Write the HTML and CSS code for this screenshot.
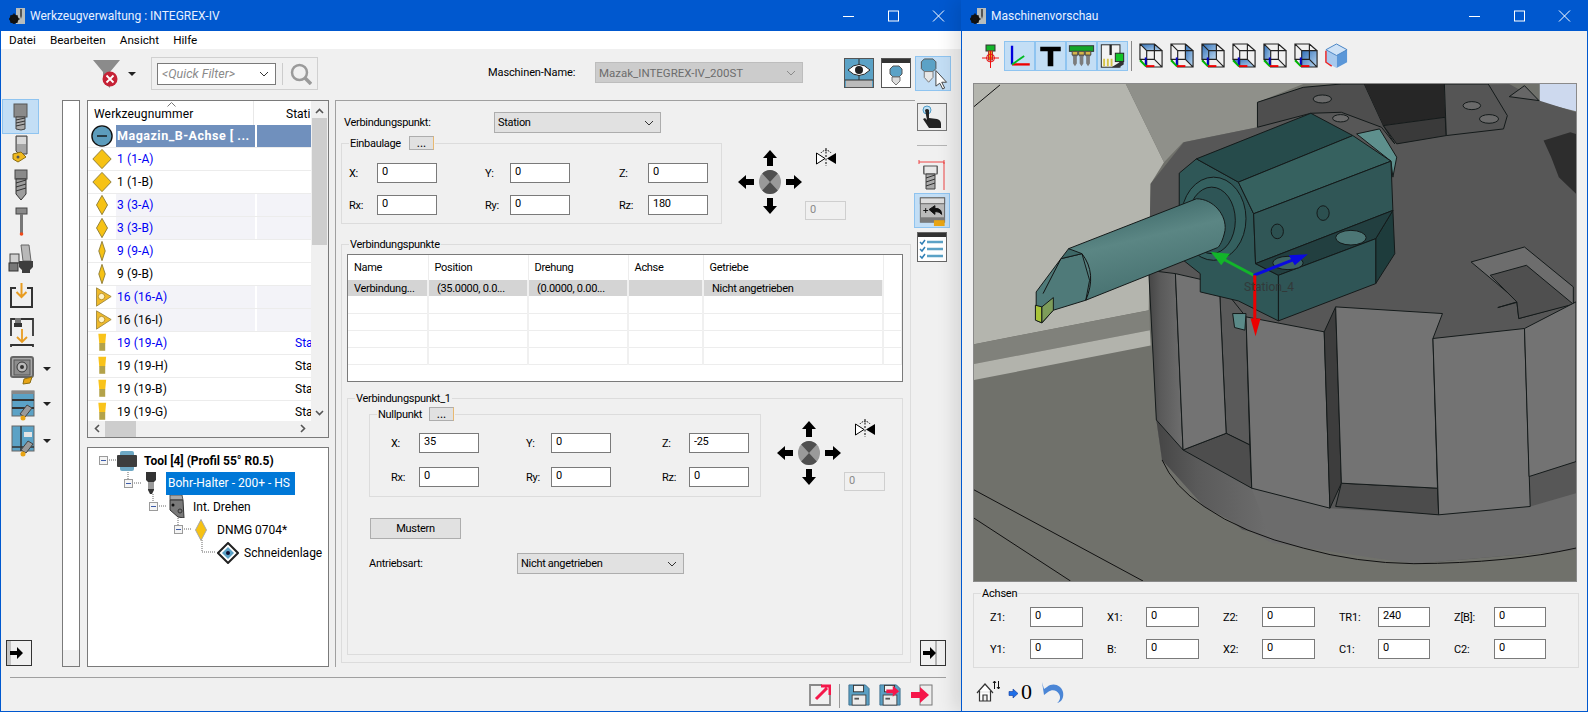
FILE: index.html
```html
<!DOCTYPE html>
<html lang="de">
<head>
<meta charset="utf-8">
<title>Werkzeugverwaltung</title>
<link rel="stylesheet" href="styles.css">
</head>
<body>
<svg class="defs" width="0" height="0" aria-hidden="true">
  <defs>
    <linearGradient id="gBlue" x1="0" y1="0" x2="1" y2="1"><stop offset="0" stop-color="#2f6fb8"/><stop offset="1" stop-color="#bcd8f0"/></linearGradient>
    <linearGradient id="gShank" x1="0.35" y1="0.05" x2="0.62" y2="0.8"><stop offset="0" stop-color="#3d6868"/><stop offset="0.45" stop-color="#5b8684"/><stop offset="1" stop-color="#4a7473"/></linearGradient>
    <linearGradient id="gSide" x1="0" y1="0" x2="1" y2="0"><stop offset="0" stop-color="#454545"/><stop offset="0.35" stop-color="#5a5a5a"/><stop offset="1" stop-color="#6e6e6e"/></linearGradient>
    <symbol id="app" viewBox="0 0 16 16"><rect x="7" y="0" width="9" height="16" fill="#b8bdbd"/><path d="M11 1h2v7l-1 3-1-3z" fill="#555"/><circle cx="5" cy="11" r="4.5" fill="#111"/><circle cx="5" cy="11" r="1.6" fill="#ddd"/><path d="M5 5.500v11M-.5 11h11M1.500 7.500l7 7M8.500 7.500l-7 7" stroke="#111" stroke-width="1.400"/></symbol>
    <symbol id="dWide" viewBox="0 0 24 24"><path d="M12 1.500 22 12 12 22.500 2 12z" fill="#f6c214" stroke="#8b7a34"/></symbol>
    <symbol id="dMid" viewBox="0 0 24 24"><path d="M12 1.500 18 12 12 22.500 6 12z" fill="#f6c214" stroke="#8b7a34"/></symbol>
    <symbol id="dThin" viewBox="0 0 24 24"><path d="M12 1.500 15.500 12 12 22.500 8.500 12z" fill="#f6c214" stroke="#8b7a34"/></symbol>
    <symbol id="tri" viewBox="0 0 24 24"><path d="M6 2 22 11.500 6 22z" fill="#f0ba2a" stroke="#a08a40"/><circle cx="11.500" cy="11.500" r="3.500" fill="#fff3c8" stroke="#b58c1f"/></symbol>
    <symbol id="bar" viewBox="0 0 24 24"><path d="M8 2h8.500l-1 10.500H9z" fill="#f9c31a"/><path d="M9 12h6.500v8.500H9z" fill="#b3a24a"/></symbol>
    <symbol id="minus" viewBox="0 0 24 24"><circle cx="12" cy="12" r="11" fill="#5c9cbc" stroke="#111" stroke-width="1.500"/><path d="M6.500 12h11" stroke="#111" stroke-width="1.500"/></symbol>
    <symbol id="exp" viewBox="0 0 9 9"><rect x=".5" y=".5" width="8" height="8" fill="#f4f4f4" stroke="#9a9a9a"/><path d="M2 4.500h5" stroke="#3c5ba8"/></symbol>
    <symbol id="mirror" viewBox="0 0 20 18"><path d="M.5 5 9 10.500.5 16z" fill="#fff" stroke="#000"/><path d="M20 5 11 10.500 20 16z" fill="#000"/><path d="M10 0v18" stroke="#000" stroke-dasharray="2 1.500"/><path d="M5 5a6 6 0 0 1 10 0" fill="none" stroke="#000" stroke-dasharray="1.500 1"/></symbol>
    <symbol id="nav" viewBox="0 0 64 64"><path d="M32 0 39 8H35V16H29V8H25zM32 64 39 56H35V48H29V56H25zM0 32 8 25V29H16V35H8V39zM64 32 56 25V29H48V35H56V39z" fill="#000"/><ellipse cx="32" cy="32" rx="11" ry="12" fill="#9a9a9a"/><path d="M32 32 24.200 23.500A11 12 0 0 1 39.800 23.500zM32 32 39.800 40.500A11 12 0 0 1 24.200 40.500z" fill="#4f4f4f"/></symbol>
    <symbol id="push" viewBox="0 0 26 26"><rect x=".5" y=".5" width="25" height="25" fill="#f0f0f0" stroke="#333"/><rect x="1" y="1" width="4" height="24" fill="#c4c4c4"/><path d="M4 11h7V7l6 6-6 6v-4H4z" fill="#000"/></symbol>
    <symbol id="pushR" viewBox="0 0 26 26"><rect x=".5" y=".5" width="25" height="25" fill="#f0f0f0" stroke="#333"/><rect x="15" y="1" width="2" height="24" fill="#b4b4b4"/><path d="M3 11h7V7l6 6-6 6v-4H3z" fill="#000"/></symbol>
    <symbol id="cube" viewBox="0 0 26 26"><path d="M1 1H16V17H1zM8 8H24V25H8zM1 1 8 8M16 1 24 8M1 17 8 25M16 17 24 25" fill="none" stroke="#222" stroke-width="1.200"/><path d="M7 15V24" stroke="#00c" stroke-width="2"/><path d="M7 24H16" stroke="#e00" stroke-width="2"/><path d="M1 18 7 24" stroke="#0b0" stroke-width="2"/></symbol>
    <symbol id="floppy" viewBox="0 0 24 24"><path d="M1 1H19L23 5V23H1z" fill="#5aa0c4" stroke="#3d6f8c"/><rect x="6" y="1.500" width="11" height="7" fill="#f4f4f4" stroke="#333"/><rect x="4.500" y="12" width="15" height="11" fill="#ececec" stroke="#444"/><path d="M7 16h5" stroke="#555" stroke-width="2"/></symbol>
  </defs>
</svg>

<main class="desktop">
  <section class="win win-left">
    <header class="title">
      <svg class="title-ico"><use href="#app"/></svg>
      <span class="title-text">Werkzeugverwaltung : INTEGREX-IV</span>
      <span class="wctl"><svg viewBox="0 0 45 12"><path d="M17 6.500H28" stroke="#fff"/></svg></span>
      <span class="wctl"><svg viewBox="0 0 45 12"><rect x="17.500" y="1" width="10" height="10" fill="none" stroke="#fff"/></svg></span>
      <span class="wctl"><svg viewBox="0 0 45 12"><path d="M17 .5 28 11.500M28 .5 17 11.500" stroke="#fff"/></svg></span>
    </header>
    <nav class="menu"><span>Datei</span><span>Bearbeiten</span><span>Ansicht</span><span>Hilfe</span></nav>

    <div class="topbar">
      <svg class="funnel" viewBox="0 0 30 30"><path d="M1 1H28L18 13V29L11 22V13z" fill="#8b8b8b"/><circle cx="18" cy="20" r="7.500" fill="#c62236"/><path d="M14.500 16.500l7 7M21.500 16.500l-7 7" stroke="#fff" stroke-width="1.800"/></svg>
      <i class="caret funnel-caret"></i>
      <div class="qf">
        <div class="combo qf-combo"><em>&lt;Quick Filter&gt;</em><svg class="chev" viewBox="0 0 10 6"><path d="M1 1l4 4 4-4" fill="none" stroke="#333"/></svg></div>
        <b class="qf-sep"></b>
        <svg class="search" viewBox="0 0 22 22"><circle cx="9.500" cy="9.500" r="7.500" fill="none" stroke="#9a9a9a" stroke-width="2.500"/><path d="M15 15l6 6" stroke="#9a9a9a" stroke-width="3.500"/></svg>
      </div>
      <span class="mach-label">Maschinen-Name:</span>
      <div class="combo mach"><span>Mazak_INTEGREX-IV_200ST</span><svg class="chev" viewBox="0 0 10 6"><path d="M1 1l4 4 4-4" fill="none" stroke="#8a8a8a"/></svg></div>
      <svg class="tb-ico eye" viewBox="0 0 30 30"><rect x=".5" y=".5" width="29" height="29" fill="#5ba2c6" stroke="#555"/><rect x="2" y="22" width="26" height="7" fill="#bbb"/><path d="M15 1v21M1 22h28" stroke="#333"/><path d="M4 12q11-11 22 0q-11 11-22 0z" fill="#fff" stroke="#222"/><circle cx="15" cy="12" r="4" fill="#222"/></svg>
      <svg class="tb-ico win2" viewBox="0 0 30 30"><rect x=".5" y=".5" width="29" height="29" fill="#fff" stroke="#555"/><rect x="1" y="1" width="28" height="4" fill="#333"/><path d="M9 11l3-3h6l3 3v5l-3 3h-6l-3-3z" fill="#5ba2c6" stroke="#555"/><path d="M11 19h8v4l-4 4-4-4z" fill="#ddd" stroke="#777"/></svg>
      <button class="hl tb-hl"><svg viewBox="0 0 34 34"><path d="M5 5l3-3h9l3 3v7l-3 3H8l-3-3z" fill="#5ba2c6" stroke="#555"/><path d="M8 15h9v6l-4.500 5L8 21z" fill="#e8e8e8" stroke="#777"/><path d="M20 14v16l4-3 3 6 2-1-3-6h5z" fill="#fff" stroke="#444"/></svg></button>
    </div>

    <div class="mainrow">
      <aside class="rail">
        <div class="rail-btns">
          <button class="rb hl"><svg viewBox="0 0 36 36"><rect x="11" y="5" width="13" height="13" fill="#8a8a8a" stroke="#555"/><path d="M13 18h9v12l-4 1-5-1z" fill="#aaa" stroke="#444"/><path d="M13 21l9-2M13 24l9-2M13 27l9-2" stroke="#333"/></svg></button>
          <button class="rb"><svg viewBox="0 0 36 36"><path d="M13 3h11v18h-8l-3-3z" fill="#a4a4a4" stroke="#444"/><path d="M14 4h9v7h-9z" fill="#d8d8d8"/><path d="M10 21l8-2 5 5-8 5-5-3z" fill="#f0b91e" stroke="#8a6c10"/><circle cx="15" cy="24" r="1.500" fill="#555"/></svg></button>
          <button class="rb"><svg viewBox="0 0 36 36"><rect x="12" y="2" width="12" height="9" fill="#8a8a8a" stroke="#444"/><path d="M13 11h10v15l-5 6-5-6z" fill="#9d9d9d" stroke="#333"/><path d="M13 15l10-3M13 19l10-3M13 23l10-3" stroke="#333"/></svg></button>
          <button class="rb"><svg viewBox="0 0 36 36"><rect x="13" y="4" width="11" height="6" fill="#8a8a8a" stroke="#444"/><rect x="17" y="10" width="3" height="19" fill="#777"/><circle cx="18.500" cy="30" r="1.800" fill="#f04a1a"/></svg></button>
          <button class="rb"><svg viewBox="0 0 36 36"><path d="M18 3h8l2 16H20z" fill="#b8b8b8" stroke="#666"/><path d="M16 19h14v6l-3 3v3h-8v-3l-3-3z" fill="#3e3e3e"/><rect x="7" y="12" width="9" height="9" fill="#d0d0d0" stroke="#444"/><rect x="6" y="21" width="9" height="8" fill="#777" stroke="#333"/></svg></button>
          <button class="rb"><svg viewBox="0 0 36 36"><path d="M13 9H8v19h21V9H24" fill="none" stroke="#333" stroke-width="2"/><path d="M18.500 4v14M13.500 13l5 5 5-5" fill="none" stroke="#e89c20" stroke-width="2"/></svg></button>
          <button class="rb"><svg viewBox="0 0 36 36"><path d="M18 4H30V21M8 21V4h4M8 32v-2H30v2" fill="none" stroke="#333" stroke-width="1.800"/><rect x="12" y="3" width="6" height="5" fill="#777"/><rect x="11" y="8" width="8" height="4" fill="#333"/><path d="M19 14v13M14 22l5 5 5-5" fill="none" stroke="#e89c20" stroke-width="1.800"/></svg></button>
          <button class="rb rb-m"><svg viewBox="0 0 36 36"><rect x="8" y="6" width="22" height="20" rx="2" fill="#a8a8a8" stroke="#666" stroke-width="2"/><rect x="11" y="9" width="16" height="15" fill="#8d8d8d" stroke="#555"/><circle cx="19" cy="16" r="5" fill="#bbb" stroke="#333"/><circle cx="19" cy="16" r="2" fill="#333"/><path d="M21 28l8-2-2 6-7 1z" fill="#e8a414" stroke="#8a6c10"/></svg><i class="caret"></i></button>
          <button class="rb rb-m"><svg viewBox="0 0 36 36"><rect x="9" y="4" width="22" height="25" fill="#5ba2c6" stroke="#666"/><rect x="9" y="4" width="22" height="3" fill="#888"/><path d="M9 13h22M9 21h22" stroke="#333" stroke-width="2"/><path d="M24 18l5 3-7 9-5-3z" fill="#9a9a9a" stroke="#444"/><circle cx="20" cy="31" r="2.500" fill="#e8a414"/></svg><i class="caret"></i></button>
          <button class="rb rb-m"><svg viewBox="0 0 36 36"><rect x="9" y="3" width="22" height="25" fill="#5ba2c6" stroke="#666"/><path d="M18 3v25M9 24h22" stroke="#333" stroke-width="1.500"/><rect x="21" y="9" width="8" height="5" fill="#e4e4e4"/><path d="M25 18l5 3-7 9-5-3z" fill="#9a9a9a" stroke="#444"/><circle cx="20" cy="31" r="2.500" fill="#e8a414"/></svg><i class="caret"></i></button>
        </div>
        <svg class="push"><use href="#push"/></svg>
      </aside>

      <div class="thin"><div class="thin-in"></div></div>

      <div class="stack">
        <div class="list">
          <div class="list-top">
            <div class="list-main">
              <div class="list-head"><span class="h1">Werkzeugnummer</span><span class="h2">Stati</span><svg class="sort" viewBox="0 0 9 5"><path d="M.5 4.500 4.500.5l4 4" fill="none" stroke="#777"/></svg></div>
              <div class="row sel"><svg class="ri"><use href="#minus"/></svg><span class="c1">Magazin_B-Achse [ ...</span><span class="c2"></span></div>
              <div class="row"><svg class="ri"><use href="#dWide"/></svg><span class="c1 bl">1 (1-A)</span><span class="c2"></span></div>
              <div class="row"><svg class="ri"><use href="#dWide"/></svg><span class="c1">1 (1-B)</span><span class="c2"></span></div>
              <div class="row alt"><svg class="ri"><use href="#dMid"/></svg><span class="c1 bl">3 (3-A)</span><span class="c2"></span></div>
              <div class="row alt"><svg class="ri"><use href="#dMid"/></svg><span class="c1 bl">3 (3-B)</span><span class="c2"></span></div>
              <div class="row"><svg class="ri"><use href="#dThin"/></svg><span class="c1 bl">9 (9-A)</span><span class="c2"></span></div>
              <div class="row"><svg class="ri"><use href="#dThin"/></svg><span class="c1">9 (9-B)</span><span class="c2"></span></div>
              <div class="row alt"><svg class="ri"><use href="#tri"/></svg><span class="c1 bl">16 (16-A)</span><span class="c2"></span></div>
              <div class="row alt"><svg class="ri"><use href="#tri"/></svg><span class="c1">16 (16-I)</span><span class="c2"></span></div>
              <div class="row"><svg class="ri"><use href="#bar"/></svg><span class="c1 bl">19 (19-A)</span><span class="c2 bl">Station</span></div>
              <div class="row"><svg class="ri"><use href="#bar"/></svg><span class="c1">19 (19-H)</span><span class="c2">Station</span></div>
              <div class="row"><svg class="ri"><use href="#bar"/></svg><span class="c1">19 (19-B)</span><span class="c2">Station</span></div>
              <div class="row"><svg class="ri"><use href="#bar"/></svg><span class="c1">19 (19-G)</span><span class="c2">Station</span></div>
            </div>
            <div class="vscroll">
              <svg class="sa" viewBox="0 0 9 6"><path d="M1 5l3.500-3.500L8 5" fill="none" stroke="#555" stroke-width="1.600"/></svg>
              <div class="vthumb"></div>
              <svg class="sa sa-d" viewBox="0 0 9 6"><path d="M1 1l3.500 3.500L8 1" fill="none" stroke="#555" stroke-width="1.600"/></svg>
            </div>
          </div>
          <div class="hscroll">
            <svg class="sh" viewBox="0 0 6 9"><path d="M5 1 1.500 4.500 5 8" fill="none" stroke="#555" stroke-width="1.600"/></svg>
            <div class="hthumb"></div>
            <svg class="sh sh-r" viewBox="0 0 6 9"><path d="M1 1l3.500 3.500L1 8" fill="none" stroke="#555" stroke-width="1.600"/></svg>
          </div>
        </div>

        <div class="tree">
          <svg class="tree-lines" viewBox="0 0 240 130"><path d="M19 12H28M40 24V34M44 35H54M65 46V58M69 58H79M90 70V80M94 81H104M114 92V104H128" fill="none" stroke="#666" stroke-dasharray="1 1"/></svg>
          <div class="tr tr0"><svg class="ex"><use href="#exp"/></svg><svg class="ti ti0" viewBox="0 0 20 20"><rect x="3" y="0" width="14" height="20" rx="2" fill="#6ea8c4"/><rect x="0" y="4" width="20" height="12" rx="1" fill="#3d3d3d"/></svg><b>Tool [4] (Profil 55° R0.5)</b></div>
          <div class="tr tr1"><svg class="ex"><use href="#exp"/></svg><svg class="ti ti1" viewBox="0 0 12 23"><path d="M1 0h10v8l-2 2v8l-2 4H5l-2-4v-8L1 8z" fill="#333"/><path d="M3 10h6v7H3z" fill="#9a9a9a"/></svg><span class="tsel">Bohr-Halter - 200+ - HS</span></div>
          <div class="tr tr2"><svg class="ex"><use href="#exp"/></svg><svg class="ti ti2" viewBox="0 0 16 23"><path d="M1 0h12l1 5H1z" fill="#a8a8a8" stroke="#555"/><path d="M1 5h13l1 18-6-1-8-7z" fill="#7a7a7a" stroke="#333"/><circle cx="4" cy="10" r="1.500" fill="#111"/><circle cx="11" cy="16" r="2" fill="none" stroke="#333"/></svg><span>Int. Drehen</span></div>
          <div class="tr tr3"><svg class="ex"><use href="#exp"/></svg><svg class="ti ti3" viewBox="0 0 12 22"><path d="M6 .5 11.500 11 6 21.500 .5 11z" fill="#f6c214" stroke="#a8a8a8"/></svg><span>DNMG 0704*</span></div>
          <div class="tr tr4"><svg class="ti ti4" viewBox="0 0 22 22"><path d="M11 1 21 11 11 21 1 11z" fill="#fff" stroke="#222" stroke-width="2"/><path d="M11 5 17 11 11 17 5 11z" fill="#5ba2c6"/><circle cx="11" cy="11" r="2" fill="#113"/></svg><span>Schneidenlage</span></div>
        </div>
      </div>

      <div class="panel">
        <div class="vp-row"><span class="vp-label">Verbindungspunkt:</span><div class="combo vp-combo"><span>Station</span><svg class="chev" viewBox="0 0 10 6"><path d="M1 1l4 4 4-4" fill="none" stroke="#333"/></svg></div></div>

        <div class="xf-row">
          <div class="group g-ein">
            <div class="legend"><span>Einbaulage</span><button class="dots">...</button></div>
            <div class="coords c-a">
              <label>X:</label><input value="0"><label>Y:</label><input value="0"><label>Z:</label><input value="0">
              <label>Rx:</label><input value="0"><label>Ry:</label><input value="0"><label>Rz:</label><input value="180">
            </div>
          </div>
          <svg class="nav"><use href="#nav"/></svg>
          <div class="mir"><svg class="mir-ico"><use href="#mirror"/></svg><input class="dis" value="0" disabled></div>
        </div>

        <div class="group g-vps">
          <div class="legend"><span>Verbindungspunkte</span></div>
          <div class="tbl-wrap">
            <table class="tbl">
              <colgroup><col class="k1"><col class="k2"><col class="k3"><col class="k4"><col class="k5"><col class="k6"></colgroup>
              <thead><tr><th>Name</th><th>Position</th><th>Drehung</th><th>Achse</th><th>Getriebe</th><th></th></tr></thead>
              <tbody>
                <tr class="tsel-row"><td>Verbindung...</td><td class="ind">(35.0000, 0.0...</td><td class="ind">(0.0000, 0.00...</td><td></td><td class="ind">Nicht angetrieben</td><td class="nofill"></td></tr>
                <tr><td></td><td></td><td></td><td></td><td></td><td></td></tr>
                <tr><td></td><td></td><td></td><td></td><td></td><td></td></tr>
                <tr><td></td><td></td><td></td><td></td><td></td><td></td></tr>
                <tr><td></td><td></td><td></td><td></td><td></td><td></td></tr>
              </tbody>
            </table>
          </div>

          <div class="group g-vp1">
            <div class="legend"><span>Verbindungspunkt_1</span></div>
            <div class="xf-row">
              <div class="group g-null">
                <div class="legend"><span>Nullpunkt</span><button class="dots">...</button></div>
                <div class="coords c-b">
                  <label>X:</label><input value="35"><label>Y:</label><input value="0"><label>Z:</label><input value="-25">
                  <label>Rx:</label><input value="0"><label>Ry:</label><input value="0"><label>Rz:</label><input value="0">
                </div>
              </div>
              <svg class="nav"><use href="#nav"/></svg>
              <div class="mir"><svg class="mir-ico"><use href="#mirror"/></svg><input class="dis" value="0" disabled></div>
            </div>
            <button class="mustern">Mustern</button>
            <div class="drive"><span class="drive-label">Antriebsart:</span><div class="combo vp-combo"><span>Nicht angetrieben</span><svg class="chev" viewBox="0 0 10 6"><path d="M1 1l4 4 4-4" fill="none" stroke="#333"/></svg></div></div>
          </div>
        </div>
      </div>

      <aside class="side">
        <svg class="sb s1" viewBox="0 0 30 28"><rect x=".5" y=".5" width="29" height="27" fill="#eee" stroke="#777"/><circle cx="10" cy="7" r="4" fill="#bfe0f4" stroke="#4f9cc8"/><path d="M8 7q2-2 4 0v8l8 1q4 1 4 5v4H12l-6-9 2-1 2 2z" fill="#222"/></svg>
        <hr class="side-sep">
        <svg class="sb s2" viewBox="0 0 30 32"><path d="M2 2H27M2 0V4M27 0V4M27 2V30" fill="none" stroke="#e44" stroke-width="1"/><path d="M7 6V13H20V6" fill="none" stroke="#555" stroke-width="1.500"/><rect x="7" y="6" width="13" height="8" fill="#e8e8e8" stroke="#555"/><path d="M9 14h9v15H9z" fill="#aaa" stroke="#444"/><path d="M9 18l9-3M9 22l9-3M9 26l9-3" stroke="#333"/></svg>
        <button class="hl s3"><svg viewBox="0 0 34 34"><rect x="5" y="4" width="25" height="25" fill="#bbb" stroke="#666"/><rect x="5" y="4" width="25" height="6" fill="#ddd" stroke="#666"/><rect x="5" y="24" width="25" height="5" fill="#7a7a7a"/><path d="M8 17h5M10.500 14.500v5M14 16l6-4v3h3q4 1 4 6q-2-3-7-3v3z" fill="#111" stroke="#111"/><rect x="19" y="27" width="11" height="6" fill="#e8a414"/></svg></button>
        <svg class="sb s4" viewBox="0 0 30 30"><rect x=".5" y=".5" width="29" height="29" fill="#fff" stroke="#666"/><rect x="1" y="1" width="28" height="4" fill="#333"/><path d="M10 10h16M10 17h16M10 24h16" stroke="#5ba2c6" stroke-width="2.500"/><path d="M3 10l2 2 3-4M3 17l2 2 3-4M3 24l2 2 3-4" fill="none" stroke="#2f7fb5" stroke-width="1.500"/></svg>
        <svg class="push push-r"><use href="#pushR"/></svg>
      </aside>
    </div>

    <footer class="footer">
      <svg class="fi" viewBox="0 0 22 22"><path d="M13 1H1V21H21V9" fill="none" stroke="#888" stroke-width="1.800"/><path d="M7 15 18 4M12 2h9v9" fill="none" stroke="#f5174a" stroke-width="3"/></svg>
      <b class="fsep"></b>
      <svg class="fi"><use href="#floppy"/></svg>
      <svg class="fi fi-arrow" viewBox="0 0 24 24"><use href="#floppy"/><path d="M8 6h7V2l7 6-7 6v-4H8z" fill="#f5174a"/></svg>
      <svg class="fi fi-exit" viewBox="0 0 22 22"><rect x="9" y="1" width="12" height="20" fill="#eee" stroke="#777"/><path d="M0 8h9V3l9 8-9 8v-5H0z" fill="#f5174a"/></svg>
    </footer>
  </section>

  <section class="win win-right">
    <header class="title">
      <svg class="title-ico"><use href="#app"/></svg>
      <span class="title-text">Maschinenvorschau</span>
      <span class="wctl"><svg viewBox="0 0 45 12"><path d="M17 6.500H28" stroke="#fff"/></svg></span>
      <span class="wctl"><svg viewBox="0 0 45 12"><rect x="17.500" y="1" width="10" height="10" fill="none" stroke="#fff"/></svg></span>
      <span class="wctl"><svg viewBox="0 0 45 12"><path d="M17 .5 28 11.500M28 .5 17 11.500" stroke="#fff"/></svg></span>
    </header>
    <div class="pv-bar">
      <svg class="pv-first" viewBox="0 0 18 24"><rect x="5" y="1" width="9" height="6" fill="#12b52a" stroke="#333"/><rect x="7.500" y="7" width="4" height="9" fill="#e8a414" stroke="#a33"/><circle cx="9.500" cy="14" r="4" fill="none" stroke="#e11"/><path d="M1 14H18M9.500 7V24" stroke="#e11"/></svg>
      <button class="hl pv-t"><svg viewBox="0 0 30 30"><path d="M7 4V24" stroke="#00d" stroke-width="2.500"/><path d="M7 24H26" stroke="#e00" stroke-width="2.500"/><path d="M7 24 20 15" stroke="#0b2" stroke-width="2"/></svg></button>
      <button class="hl pv-t"><svg viewBox="0 0 30 30"><path d="M4 5H26V10H18V26H12V10H4z" fill="#000"/></svg></button>
      <button class="hl pv-t"><svg viewBox="0 0 30 30"><rect x="2" y="4" width="26" height="6" fill="#12a52a" stroke="#333"/><path d="M5 10h6v4l-1 2v7l-2 3-2-3v-7l-1-2zM12 10h6v4l-1 2v7l-2 3-2-3v-7l-1-2zM19 10h6v4l-1 2v7l-2 3-2-3v-7l-1-2z" fill="#7c7c7c"/><path d="M5 10h6v4H5zM12 10h6v4h-6zM19 10h6v4h-6z" fill="#d4b44a" stroke="#444"/></svg></button>
      <button class="hl pv-t"><svg viewBox="0 0 30 30"><rect x="3" y="3" width="20" height="24" fill="#f2f2f2" stroke="#222"/><path d="M13 3V14" stroke="#222" stroke-width="2.500"/><path d="M5 18h2v8H5zM9 18h2v8H9zM13 18h2v8h-2z" fill="#d4c44a"/><rect x="18" y="12" width="9" height="9" fill="#12c52a" stroke="#222"/><path d="M14 27l10-6h3v3l-5 3z" fill="#333"/></svg></button>
      <b class="pv-sep"></b>
      <span class="cb"><svg viewBox="0 0 26 26"><path d="M1 1H16L24 8H8z" fill="url(#gBlue)"/><use href="#cube"/></svg></span>
      <span class="cb"><svg viewBox="0 0 26 26"><path d="M16 1 24 8V25L16 17z" fill="url(#gBlue)"/><use href="#cube"/></svg></span>
      <span class="cb"><svg viewBox="0 0 26 26"><path d="M1 1H16V17H1z" fill="url(#gBlue)"/><use href="#cube"/></svg></span>
      <span class="cb"><svg viewBox="0 0 26 26"><path d="M1 17H16L24 25H8z" fill="url(#gBlue)"/><use href="#cube"/></svg></span>
      <span class="cb"><svg viewBox="0 0 26 26"><path d="M1 1 8 8V25L1 17z" fill="url(#gBlue)"/><use href="#cube"/></svg></span>
      <span class="cb"><svg viewBox="0 0 26 26"><path d="M8 8H24V25H8z" fill="url(#gBlue)"/><use href="#cube"/></svg></span>
      <span class="cb"><svg viewBox="0 0 26 26"><path d="M13 1 24 7V20L13 26z" fill="#5b97d8"/><path d="M13 1 2 7V20L13 26z" fill="#a7c9ee"/><path d="M13 1 24 7 13 13 2 7z" fill="#cfe2f6" stroke="#4a84c4"/><path d="M2 8V20L8 24" fill="none" stroke="#e22" stroke-width="1.500"/></svg></span>
    </div>

    <div class="view">
      <svg class="scene" viewBox="-3 0 1578 1494" preserveAspectRatio="none">
        <rect x="-3" y="0" width="1578" height="1494" fill="#70716b"/>
        <path d="M-3 0H395L495 235 460 300 455 680-3 782z" fill="#b4b5ae"/>
        <path d="M395 0H860L740 55V130L545 175 495 235z" fill="#8f908a"/>
        <path d="M1480 0H1575V82L1480 55z" fill="#cdd9ee"/>
        <path d="M-3 782 457 680 458 740-3 842z" fill="#80817b"/>
        <path d="M-3 842 458 740 460 786-3 890z" fill="#b2b3ac"/>
        <path d="M-3 1220 440 1494M-3 1305 250 1494M-3 68 65 3" class="ln"/>

        <!-- turret -->
        <path d="M460 300 547 175 740 130V55L860 10 1400 0 1480 50 1575 85V1400L1150 1442 700 1340 490 1130 475 1010 455 560z" fill="#575757"/>
        <path d="M860 10 960 0H1020L1070 125 1100 180 1065 130 960 85 880 88 740 130V55z" fill="#4e4e4e" class="lnf"/>
        <path d="M1020 0H1230L1232 100 1070 125z" fill="#262626"/>
        <path d="M1070 125 1232 100 1235 155 1105 180z" fill="#3a3a3a" class="lnf"/>
        <path d="M1235 155 1385 135 1395 95 1345 0H1230z" fill="#555" class="lnf"/>
        <ellipse cx="1302" cy="65" rx="23" ry="12" fill="#6a6a6a" class="lnf"/>
        <ellipse cx="1347" cy="105" rx="25" ry="13" fill="#6a6a6a" class="lnf"/>
        <ellipse cx="910" cy="45" rx="24" ry="12" fill="#6a6a6a" class="lnf"/>
        <ellipse cx="958" cy="103" rx="21" ry="11" fill="#6a6a6a" class="lnf"/>
        <path d="M1400 38 1440 5 1478 50z" fill="#666" class="lnf"/>
        <path d="M1490 170 1560 145 1575 150V330L1530 280 1510 220z" fill="#2d2d2d"/>
        <path d="M1300 535 1440 490 1568 610 1568 660 1425 705 1420 655 1370 672 1425 655z" fill="#6d6d6d" class="lnf"/>
        <path d="M1350 575 1445 545 1568 662 1425 705 1420 655z" fill="#4f4f4f" class="lnf"/>

        <!-- lower ring -->
        <path d="M475 1010 545 1100 725 1215 930 1275 1215 1295 1455 1270 1575 1230V1400L1150 1442 780 1380 600 1270 490 1130z" fill="#6c6c6c"/>
        <path d="M475 1010 545 1100 725 1215 780 1380 600 1270 490 1130z" fill="url(#gSide)"/>
        <path d="M490 1130Q520 1210 600 1270 700 1350 860 1395 1000 1440 1150 1442 1400 1440 1575 1395" class="ln"/>

        <!-- recesses and blocks -->
        <path d="M455 560 525 570 545 1100 475 1010z" fill="url(#gSide)" class="lnf"/>
        <path d="M640 600 710 700 720 1085 658 1050z" fill="#5a5a5a" class="lnf"/>
        <path d="M545 1100 658 1050 720 1085 725 1215z" fill="#4d4d4d" class="lnf"/>
        <path d="M525 570 640 600 658 1050 545 1100z" fill="#737373" class="lnf"/>
        <path d="M710 700 915 745 930 1275 725 1215z" fill="#737373" class="lnf"/>
        <path d="M915 745 945 670 960 1200 930 1275z" fill="#3d3d3d" class="lnf"/>
        <path d="M945 1270 960 1200 1212 1215 1215 1295z" fill="#4c4c4c" class="lnf"/>
        <path d="M945 670 1225 690 1200 765 1212 1215 960 1200z" fill="#737373" class="lnf"/>
        <path d="M1200 765 1440 735 1455 1270 1215 1295z" fill="#737373" class="lnf"/>
        <path d="M1440 735 1575 655V1135L1452 1180z" fill="#737373" class="lnf"/>

        <!-- tool holder -->
        <path d="M1000 150 1060 135 1105 220 1095 280 1090 232z" fill="#5e908d" class="lnf"/>
        <path d="M675 690H710L707 740 680 732z" fill="#5b8a88" class="lnf"/>
        <path d="M535 268 580 225 690 295 730 390 735 540 795 575V712L690 652 590 625 590 570 535 520z" fill="#2f5757" class="lnf"/>
        <path d="M580 225 880 88 990 155 690 295z" fill="#264b4b" class="lnf"/>
        <path d="M690 295 990 155 1090 232 730 390z" fill="#36615f" class="lnf"/>
        <path d="M730 390 1090 232 1095 380 735 540z" fill="#305656" class="lnf"/>
        <path d="M1095 380 1100 510 1050 600 1050 465z" fill="#1e3c3c" class="lnf"/>
        <path d="M735 540 1095 380 1050 465 795 575z" fill="#223f40" class="lnf"/>
        <path d="M795 575 1050 465V600L795 712z" fill="#2f5556" class="lnf"/>
        <ellipse cx="985" cy="462" rx="40" ry="22" fill="#4c7675" class="lnf"/>
        <ellipse cx="820" cy="538" rx="40" ry="20" fill="#3e6564" class="lnf"/>
        <ellipse cx="792" cy="443" rx="16" ry="22" fill="#2c5050" class="lnf"/>
        <ellipse cx="912" cy="388" rx="16" ry="22" fill="#2c5050" class="lnf"/>
        <ellipse cx="625" cy="405" rx="85" ry="125" fill="#34605f" class="lnf"/>
        <ellipse cx="620" cy="410" rx="62" ry="100" fill="#2e5556" class="lnf"/>
        <path d="M245 495 580 345C625 345 660 395 655 440 650 470 640 490 635 492L290 650z" fill="url(#gShank)" class="lnf"/>
        <path d="M160 625 225 525 280 510 300 590 290 650 205 680 175 718 160 710z" fill="#4f7a79" class="lnf"/>
        <path d="M225 525 280 510 245 495z" fill="#3e6867" class="lnf"/>
        <path d="M280 510Q320 570 290 650" class="ln"/>
        <path d="M178 630 225 525" class="ln"/>
        <path d="M158 665 175 670V718L158 710z" fill="#a9c43a" class="lnf"/>
        <path d="M175 670 205 642V680L175 718z" fill="#7d9c5a" class="lnf"/>

        <!-- axes -->
        <path d="M730 575 640 520" stroke="#12b52a" stroke-width="3" vector-effect="non-scaling-stroke" fill="none"/>
        <path d="M618 505 668 510 645 545z" fill="#12b52a"/>
        <path d="M730 575 835 528" stroke="#0a0ae0" stroke-width="3" vector-effect="non-scaling-stroke" fill="none"/>
        <path d="M872 512 822 515 838 545z" fill="#0a0ae0"/>
        <path d="M733 575V710" stroke="#e00" stroke-width="3" vector-effect="non-scaling-stroke" fill="none"/>
        <path d="M735 758 722 705H748z" fill="#e00"/>
      </svg>
      <span class="station">Station_4</span>
    </div>

    <div class="group g-axes">
      <div class="legend"><span>Achsen</span></div>
      <div class="coords c-axes">
        <label>Z1:</label><input value="0"><label>X1:</label><input value="0"><label>Z2:</label><input value="0"><label>TR1:</label><input value="240"><label>Z[B]:</label><input value="0">
        <label>Y1:</label><input value="0"><label>B:</label><input value="0"><label>X2:</label><input value="0"><label>C1:</label><input value="0"><label>C2:</label><input value="0">
      </div>
    </div>

    <div class="pv-foot">
      <svg class="house" viewBox="0 0 24 24"><path d="M1 13 9 4l8 9M3.500 11v10h11V11M7 21v-6h4v6" fill="#fff" stroke="#333" stroke-width="1.200"/><path d="M18.500 9V1M17 3 18.500 1 20 3M22.500 1v8M21 7l1.500 2L24 7" fill="none" stroke="#111"/></svg>
      <svg class="go0" viewBox="0 0 11 11"><path d="M1 3.500h4V1l5 4.500L5 10V7.500H1z" fill="#1f6fe8" stroke="#123a9a" stroke-width=".6"/></svg>
      <span class="zero">0</span>
      <svg class="undo" viewBox="0 0 24 24"><path d="M1 2 3 15l4-3c4-3 9-2 11 2 2 3 1 7-2 9 5-1 7-6 6-11C20 5 12 2 6 7L3 9z" fill="#4b86d6"/></svg>
    </div>
  </section>
</main>
</body>
</html>
```

FILE: styles.css
```css
* { box-sizing: border-box; }
html, body { margin: 0; padding: 0; }
body { width: 1588px; height: 712px; overflow: hidden; background: #f0f0f0; font: 12px Roboto, "Liberation Sans", sans-serif; color: #000; }
.defs { position: absolute; }
svg { display: block; flex: none; }
button { font: inherit; padding: 0; margin: 0; }

.desktop { position: relative; width: 1588px; height: 712px; }
.win { position: absolute; top: 0; height: 712px; background: #f0f0f0; border: 1px solid #0058cf; border-top: 0; display: flex; flex-direction: column; }
.win-left { left: 0; width: 961px; border-right: 0; }
.win-right { left: 961px; width: 627px; box-shadow: -6px 0 18px rgba(0,0,0,.12); }

.title { height: 31px; flex: none; background: #0058cf; color: #fff; display: flex; align-items: center; padding-left: 8px; font-size: 12px; }
.title-ico { width: 16px; height: 16px; margin-right: 5px; }
.title-text { flex: 1; color: #e8f0ff; }
.wctl { width: 45px; flex: none; }
.wctl svg { width: 45px; height: 12px; }

.menu { height: 18px; flex: none; background: #fff; display: flex; align-items: center; padding-left: 1px; font-size: 11.700px; }
.menu span { padding: 0 7px; }

.topbar { height: 51px; flex: none; display: flex; align-items: flex-start; }
.funnel { width: 30px; height: 30px; margin: 10px 0 0 91px; }
.caret { display: block; width: 0; height: 0; border: 4px solid transparent; border-top: 4px solid #222; border-bottom: 0; }
.funnel-caret { margin: 23px 0 0 6px; }
.qf { width: 167px; height: 33px; margin: 8px 0 0 15px; border: 1px solid #d0d0d0; display: flex; align-items: center; padding-left: 5px; }
.combo { display: flex; align-items: center; justify-content: space-between; height: 21px; border: 1px solid #adadad; background: #e1e1e1; padding: 0 6px 0 3px; }
.chev { width: 10px; height: 6px; }
.qf-combo { width: 119px; height: 22px; background: #fff; border-color: #7a7a7a; padding-left: 4px; }
.qf-combo em { color: #8a8a8a; font-style: italic; font-size: 12.500px; }
.qf-sep { width: 1px; height: 22px; background: #ccc; margin-left: 6px; }
.search { width: 22px; height: 22px; margin-left: 7px; }
.mach-label { margin: 17px 0 0 170px; width: 107px; font-size: 11px; letter-spacing: -.1px; }
.mach { width: 208px; margin-top: 13px; background: #cccccc; border-color: #bdbdbd; color: #6d6d6d; font-size: 11.500px; }
.tb-ico { width: 30px; height: 30px; margin-top: 9px; }
.eye { margin-left: 41px; }
.win2 { margin-left: 7px; }
.hl { background: #c3def5; border: 1px solid #8fc4f0; display: block; }
.tb-hl { width: 36px; height: 35px; margin: 7px 0 0 4px; }
.tb-hl svg { width: 34px; height: 33px; }

.mainrow { height: 567px; flex: none; display: flex; align-items: stretch; }
.rail { width: 61px; flex: none; display: flex; flex-direction: column; justify-content: space-between; padding-bottom: 1px; }
.rail-btns { display: grid; grid-template-rows: 35px 34px 35px 38px 38px 36px 36px 35px 37px 36px; margin-top: -1px; }
.rb { width: 37px; margin-left: 1px; background: none; border: 0; position: relative; display: flex; align-items: center; justify-content: center; }
.rb.hl { border: 1px solid #8fc4f0; background: #c3def5; }
.rb svg { width: 36px; height: 36px; }
.rb-m .caret { position: absolute; left: 41px; top: 16px; }
.push { width: 26px; height: 26px; margin-left: 5px; }

.thin { width: 18px; flex: none; border: 1px solid #7a7a7a; }
.thin-in { height: 549px; background: #fff; }

.stack { width: 242px; margin-left: 7px; flex: none; display: flex; flex-direction: column; justify-content: space-between; }
.list { height: 338px; background: #f0f0f0; border: 1px solid #7a7a7a; overflow: hidden; }
.list-top { display: flex; height: 320px; }
.list-main { width: 223px; height: 320px; overflow: hidden; background: #fff; }
.list-head { height: 24px; position: relative; display: flex; align-items: flex-end; padding-bottom: 4px; background: linear-gradient(to right, #fff 165px, #e8e8e8 165px, #e8e8e8 166px, #fff 166px); }
.h1 { width: 198px; padding-left: 6px; font-size: 12px; letter-spacing: .15px; }
.h2 { width: 25px; overflow: hidden; }
.sort { position: absolute; left: 79px; top: 1px; width: 9px; height: 5px; }
.row { height: 23px; display: flex; align-items: center; border-bottom: 1px solid #ececec; }
.ri { width: 24px; height: 22px; margin: 0 2px; flex: none; }
.c1 { width: 139px; height: 22px; line-height: 22px; flex: none; padding-left: 1px; white-space: nowrap; overflow: hidden; font-size: 12px; letter-spacing: .1px; }
.c2 { width: 56px; height: 22px; line-height: 22px; margin-left: 2px; flex: none; padding-left: 38px; white-space: nowrap; overflow: hidden; }
.bl { color: #0000f5; }
.alt .c1, .alt .c2 { background: #f3f3f8; }
.sel .c1, .sel .c2 { background: #7090bd; color: #fff; font-weight: 700; font-size: 12.500px; letter-spacing: .5px; }
.vscroll { width: 17px; height: 320px; position: relative; background: #f0f0f0; }
.sa { width: 9px; height: 6px; position: absolute; left: 4px; top: 7px; }
.sa-d { top: 309px; }
.vthumb { width: 15px; height: 127px; margin: 17px 0 0 1px; background: #cdcdcd; }
.hscroll { height: 16px; width: 223px; position: relative; background: #f0f0f0; }
.sh { width: 6px; height: 9px; position: absolute; left: 6px; top: 3px; }
.sh-r { left: 212px; }
.hthumb { position: absolute; left: 17px; top: 0; width: 31px; height: 16px; background: #cdcdcd; }

.tree { height: 220px; position: relative; background: #fff; border: 1px solid #7a7a7a; padding-top: 1px; }
.tree-lines { position: absolute; left: 0; top: 0; width: 240px; height: 130px; }
.tr { height: 23px; display: flex; align-items: center; position: relative; white-space: nowrap; }
.ex { width: 9px; height: 9px; margin-right: 9px; background: #fff; }
.tr1 .ex { margin-right: 12px; }
.tr2 .ex { margin-right: 11px; }
.tr3 .ex { margin-right: 12px; }
.tr0 { padding-left: 11px; }
.tr1 { padding-left: 36px; }
.tr2 { padding-left: 61px; }
.tr3 { padding-left: 86px; }
.tr4 { padding-left: 129px; }
.ti0 { width: 20px; height: 20px; margin-right: 7px; }
.ti1 { width: 12px; height: 23px; margin-right: 9px; }
.ti2 { width: 16px; height: 23px; margin-right: 8px; }
.ti3 { width: 12px; height: 22px; margin-right: 10px; }
.ti4 { width: 22px; height: 22px; margin-right: 5px; }
.tsel { background: #0078d7; color: #fff; height: 23px; line-height: 23px; width: 129px; padding-left: 2px; overflow: hidden; }

.panel { width: 580px; margin-left: 6px; flex: none; border-left: 1px solid #a0a0a0; border-top: 1px solid #a0a0a0; padding-left: 5px; font-size: 11px; letter-spacing: -.3px; }
.vp-row { display: flex; height: 21px; margin-top: 11px; align-items: center; }
.vp-label { width: 153px; padding-left: 3px; }
.vp-combo { width: 167px; }
.xf-row { display: flex; align-items: flex-start; }
.panel > .xf-row { margin-top: 10px; }
.group { border: 1px solid #dcdcdc; position: relative; }
.legend { position: absolute; left: 7px; top: -8px; height: 14px; display: flex; align-items: center; background: #f0f0f0; padding: 0 1px; white-space: nowrap; }
.dots { width: 25px; height: 14px; margin-left: 4px; background: #e1e1e1; border: 1px solid #adadad; border-right-color: #e8b870; line-height: 6px; font-size: 12px; letter-spacing: 0; }
.g-ein .legend span { width: 55px; }
.g-null .legend span { width: 47px; }
.g-ein { width: 381px; height: 81px; padding: 19px 0 0 7px; }
.coords { display: grid; grid-auto-rows: 20px; align-items: center; }
.coords label { padding-top: 1px; }
.coords input { width: 100%; height: 20px; border: 1px solid #7a7a7a; background: #fff; padding: 0 0 3px 4px; font: inherit; letter-spacing: inherit; color: #000; border-radius: 0; outline: none; }
.c-a { grid-template-columns: 28px 60px 73px 60px 78px 60px; row-gap: 12px; }
.c-a label:nth-of-type(3n+2) { padding-left: 48px; }
.c-a label:nth-of-type(3n) { padding-left: 49px; }
.nav { width: 64px; height: 64px; margin: 7px 0 0 16px; }
.mir { width: 41px; margin-left: 3px; padding-top: 5px; display: flex; flex-direction: column; align-items: center; }
.mir-ico { width: 20px; height: 18px; margin-bottom: 35px; }
.dis { width: 41px; height: 19px; border: 1px solid #cfcfcf; background: #f0f0f0; color: #8a8a8a; padding: 0 0 2px 4px; font: inherit; }

.g-vps { width: 570px; height: 419px; margin-top: 20px; padding: 9px 0 0 5px; }
.tbl-wrap { width: 556px; height: 128px; border: 1px solid #7a7a7a; background: #fff; overflow: hidden; }
.tbl { table-layout: fixed; border-collapse: collapse; width: 554px; }
.k1 { width: 80px; } .k2 { width: 100px; } .k3 { width: 100px; } .k4 { width: 75px; } .k5 { width: 180px; } .k6 { width: 19px; }
.tbl th { height: 25px; font-weight: 400; text-align: left; padding: 0 0 0 6px; border-right: 1px solid #ededed; }
.tbl td { height: 17px; padding: 0 0 0 6px; border-right: 2px solid #f0f0f0; border-bottom: 1px solid #ededed; white-space: nowrap; overflow: hidden; }
.tbl td.ind { padding-left: 8px; }
.tbl .tsel-row td { background: #d4d4d4; height: 16px; border-bottom: 0; }
.tbl .tsel-row td.nofill { background: #fff; }
.g-vp1 { width: 556px; height: 257px; margin-top: 16px; padding: 15px 0 0 21px; }
.g-null { width: 392px; height: 83px; padding: 18px 0 0 21px; }
.c-b { grid-template-columns: 28px 60px 72px 60px 78px 60px; row-gap: 14px; }
.c-b label:nth-of-type(3n+2) { padding-left: 47px; }
.c-b label:nth-of-type(3n) { padding-left: 51px; }
.mustern { display: block; width: 91px; height: 21px; margin: 21px 0 0 1px; background: #e1e1e1; border: 1px solid #adadad; letter-spacing: inherit; }
.drive { display: flex; align-items: center; margin-top: 14px; height: 21px; }
.drive-label { width: 148px; }

.side { width: 35px; flex: none; padding: 3px 0 1px 0; display: flex; flex-direction: column; position: relative; }
.sb { margin-left: 2px; }
.s1 { width: 30px; height: 28px; }
.side-sep { width: 30px; height: 1px; margin: 14px 0 14px 2px; border: 0; background: #b4b4b4; }
.s2 { width: 30px; height: 32px; }
.s3 { width: 36px; height: 35px; margin: 1px 0 0 -1px; }
.s3 svg { width: 34px; height: 33px; }
.s4 { width: 30px; height: 30px; margin-top: 4px; }
.push-r { margin: auto 0 0 5px; }

.footer { margin: 10px 15px 0 9px; border-top: 1px solid #a0a0a0; display: flex; justify-content: flex-end; align-items: flex-start; padding-top: 6px; height: 34px; }
.fi { width: 22px; height: 22px; }
.fsep { width: 1px; height: 24px; background: #999; margin: 0 8px; }
.fi-arrow { margin-left: 9px; }
.fi-exit { margin: 0 13px 0 10px; }

.pv-bar { height: 52px; flex: none; display: flex; align-items: center; padding: 0 0 3px 19px; }
.pv-first { width: 18px; height: 24px; }
.pv-t { width: 31px; height: 30px; }
.pv-t:first-of-type { margin-left: 5px; }
.pv-t svg { width: 29px; height: 28px; }
.pv-sep { width: 1px; height: 30px; background: #888; margin: 0 7px 0 3px; }
.cb { width: 31px; flex: none; }
.cb svg { width: 25px; height: 25px; }
.cb:last-child { margin-left: -1px; }

.view { width: 604px; height: 499px; margin-left: 11px; flex: none; border: 1px solid #8a8a8a; position: relative; overflow: hidden; }
.scene { width: 602px; height: 497px; }
.ln { fill: none; stroke: #111; stroke-width: 1; vector-effect: non-scaling-stroke; }
.lnf { stroke: #141a1a; stroke-width: 1; vector-effect: non-scaling-stroke; stroke-linejoin: round; }
.station { position: absolute; left: 270px; top: 196px; color: #333; font-size: 12px; opacity: .8; }

.g-axes { width: 606px; height: 75px; margin: 11px 0 0 11px; flex: none; padding: 13px 0 0 16px; font-size: 11px; letter-spacing: -.2px; }
.c-axes { grid-template-columns: 40px 53px 63px 53px 63px 53px 63px 52px 64px 52px; row-gap: 12px; }
.c-axes label:not(:nth-of-type(5n+1)) { padding-left: 24px; }
.pv-foot { display: flex; align-items: center; height: 24px; margin: 12px 0 0 14px; }
.house { width: 24px; height: 24px; }
.go0 { width: 11px; height: 11px; margin: 3px 0 0 8px; }
.zero { font: 22px "Liberation Serif", serif; margin-left: 2px; line-height: 24px; width: 12px; }
.undo { width: 24px; height: 24px; margin-left: 8px; }
```
